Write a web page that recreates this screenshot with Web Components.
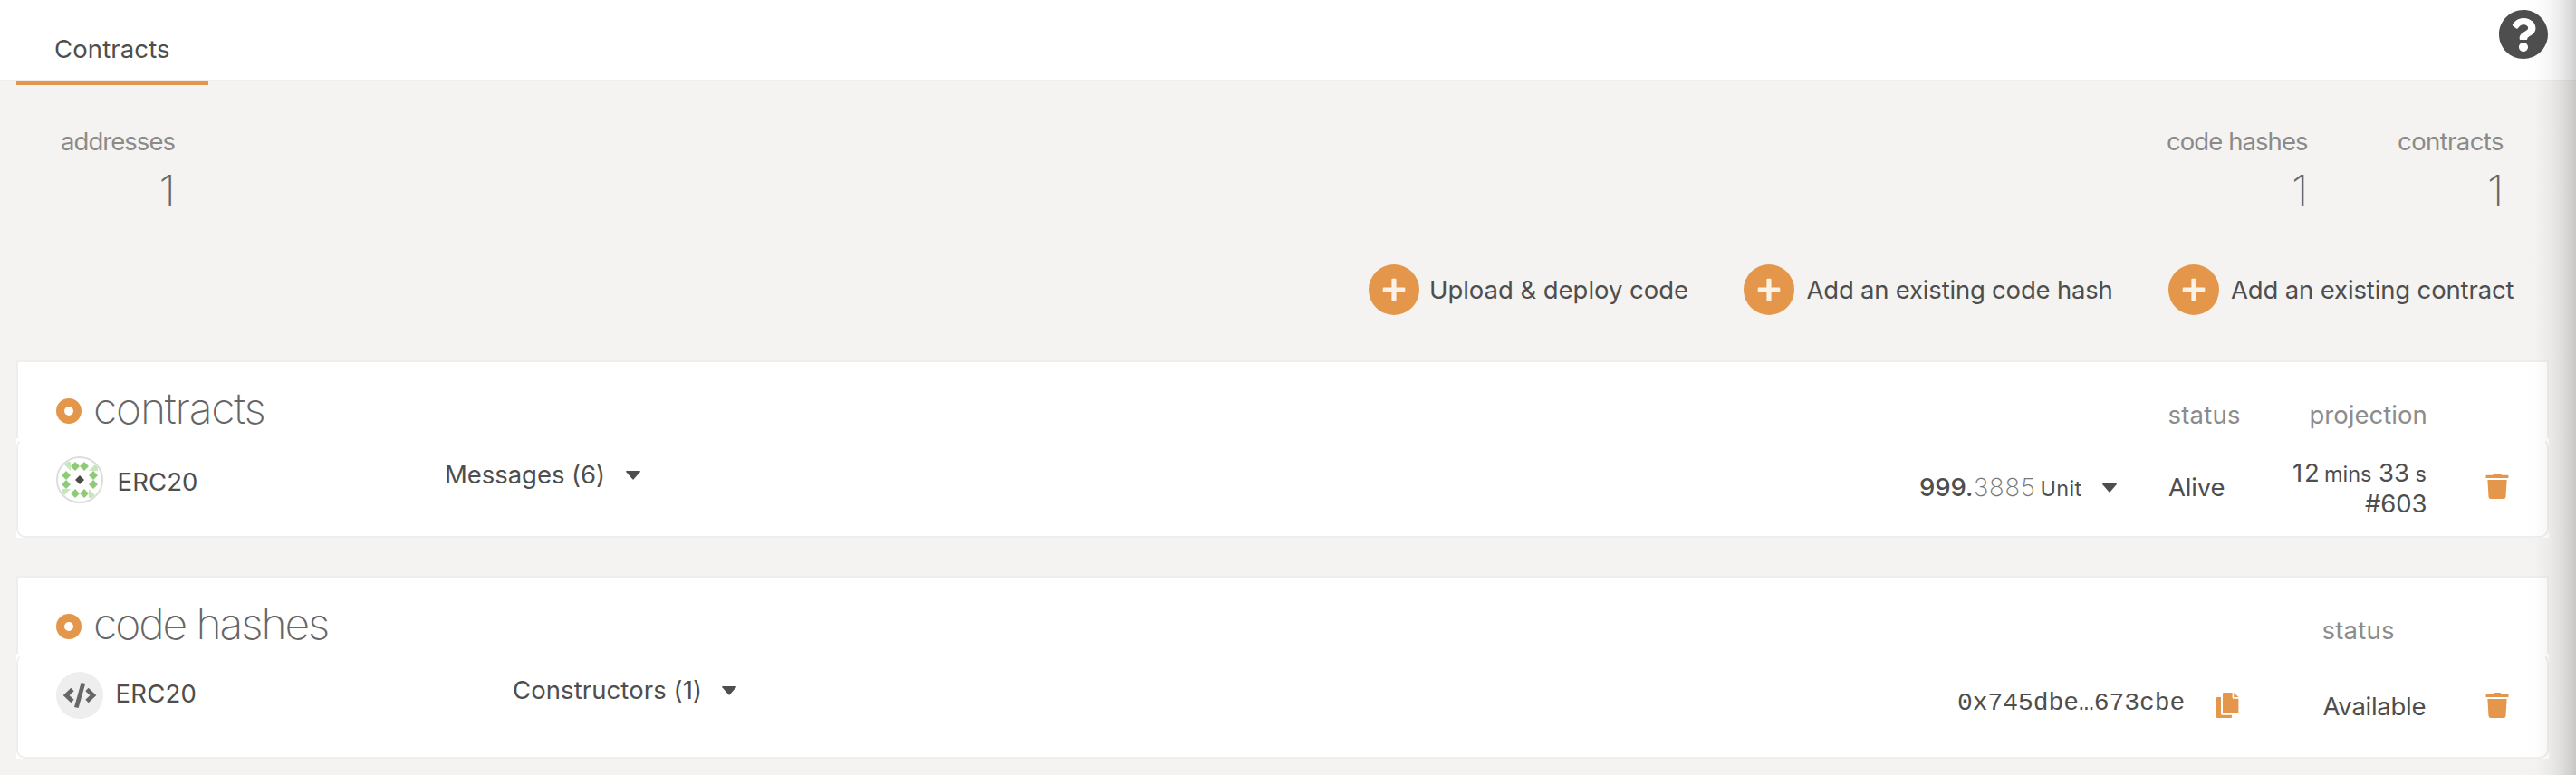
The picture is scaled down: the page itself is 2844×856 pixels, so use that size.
<!DOCTYPE html>
<html lang="en">
<head>
<meta charset="utf-8">
<title>Contracts</title>
<style>
html,body{margin:0;height:100%}
body{font-family:Inter,"Liberation Sans",sans-serif;background:#f4f3f1;color:#4e4e4e;overflow:hidden}
</style>
</head>
<body>
<contracts-app></contracts-app>
<script>
const define = (name, html, setup) => {
  const t = document.createElement('template');
  t.innerHTML = html;
  customElements.define(name, class extends HTMLElement {
    constructor() {
      super();
      this.attachShadow({ mode: 'open' }).append(t.content.cloneNode(true));
    }
    connectedCallback() { if (setup) setup(this); }
  });
};

/* Text run whose box hugs its glyphs; "w" is the tracked width of the run. */
const ctx = document.createElement('canvas').getContext('2d');
define('ui-text', `<style>:host{display:block;flex:none;white-space:pre;line-height:40px}</style><slot></slot>`, el => {
  const size = +(el.getAttribute('size') || 27.5);
  const weight = el.getAttribute('weight') || 400;
  const family = el.hasAttribute('mono') ? '"Liberation Mono", monospace' : 'Inter, "Liberation Sans", sans-serif';
  ctx.font = `${weight} ${size}px ${family}`;
  const text = el.textContent, m = ctx.measureText(text);
  const ink = m.actualBoundingBoxRight + m.actualBoundingBoxLeft;
  const ls = text.length > 1 ? (+el.getAttribute('w') - ink) / (text.length - 1) : 0;
  Object.assign(el.style, {
    font: `${weight} ${size}px/${size > 40 ? 60 : 40}px ${family}`,
    letterSpacing: ls + 'px',
    marginLeft: m.actualBoundingBoxLeft + 'px',
    marginRight: -(m.width - m.actualBoundingBoxRight + ls) + 'px'
  });
});

define('ui-caret', `<style>:host{display:block;flex:none;width:16px;height:10px}svg{display:block}</style>
<svg width="16" height="10"><path d="M.6 0H15.4Q16.2 .3 15.6 1.2L8.7 9.3Q8 10 7.3 9.3L.4 1.2Q-.2 .3 .6 0Z" fill="#4e4e4e"/></svg>`);

define('icon-trash', `<style>:host{display:block;flex:none;width:26px;height:28px}svg{display:block}</style>
<svg width="26" height="28" fill="#e4974b"><path d="M1.3 1.7H8L9 .5Q9.3 0 10 0H16Q16.7 0 17 .5L18 1.7H24.7Q25.5 1.7 25.5 2.5V5H.5V2.5Q.5 1.7 1.3 1.7Z"/><path d="M2.4 7H23.6L22.5 25.8Q22.3 28 20.2 28H5.8Q3.7 28 3.5 25.8Z"/></svg>`);

define('icon-copy', `<style>:host{display:block;flex:none;width:25px;height:28px}svg{display:block}</style>
<svg width="25" height="28" fill="#e4974b"><path d="M0 6Q0 5 1 5H5V23.5Q5 24.7 6.2 24.7H17V27Q17 28 16 28H1Q0 28 0 27Z"/><path d="M7 1Q7 0 8 0H17.6V5.4Q17.6 6.7 18.9 6.7H24.4V21.8Q24.4 22.8 23.4 22.8H8Q7 22.8 7 21.8Z"/><path d="M19.2 0 24.4 5.1H19.2Z"/></svg>`);

define('icon-help', `<style>:host{display:block;width:54px;height:54px}svg{display:block}</style>
<svg width="54" height="54" viewBox="8 8 496 496"><path fill="#4e4e4e" d="M504 256c0 136.997-111.043 248-248 248S8 392.997 8 256C8 119.083 119.043 8 256 8s248 111.083 248 248zM262.655 90c-54.497 0-89.255 22.957-116.549 63.758-3.536 5.286-2.353 12.415 2.715 16.258l34.699 26.31c5.205 3.947 12.621 3.008 16.665-2.122 17.864-22.658 30.113-35.797 57.303-35.797 20.429 0 45.698 13.148 45.698 32.958 0 14.976-12.363 22.667-32.534 33.976C247.128 238.528 216 254.941 216 296v4c0 6.627 5.373 12 12 12h56c6.627 0 12-5.373 12-12v-1.333c0-28.462 83.186-29.647 83.186-106.667 0-58.002-60.165-102-116.531-102zM256 338c-25.365 0-46 20.635-46 46 0 25.364 20.635 46 46 46s46-20.636 46-46c0-25.365-20.635-46-46-46z"/></svg>`);

define('icon-code', `<style>:host{display:block;flex:none;width:52px;height:52px;border-radius:50%;background:#eee}svg{display:block}</style>
<svg width="52" height="52"><path d="M27.6 12 32.2 13.1 24.6 40.1 20 38.9Z" fill="#666"/><path d="M18 19.6 11.2 26 18 32.4M34 19.6 40.8 26 34 32.4" fill="none" stroke="#666" stroke-width="4.8"/></svg>`);

define('icon-identity', `<style>:host{display:block;flex:none;width:52px;height:52px}svg{display:block}</style>
<svg width="52" height="52"><defs><clipPath id="c"><circle cx="26" cy="26" r="24"/></clipPath></defs>
<circle cx="26" cy="26" r="25" fill="#fff" stroke="#ddd" stroke-width="2"/>
<g clip-path="url(#c)"><path fill="#c7e6ba" d="M6 6H16V16ZM46 6V16H36ZM46 46H36V36ZM6 46V36H16Z"/>
<path fill="#8fcb77" d="M21 6l5 5-5 5-5-5zM31 6l5 5-5 5-5-5zM11 16l5 5-5 5-5-5zM41 16l5 5-5 5-5-5zM11 26l5 5-5 5-5-5zM41 26l5 5-5 5-5-5zM21 36l5 5-5 5-5-5zM31 36l5 5-5 5-5-5z"/>
<path fill="#4b4b4b" d="M26 21l5 5-5 5-5-5z"/></g></svg>`);

define('top-bar', `<style>
:host{display:flex;box-sizing:border-box;height:90px;background:#fff;border-bottom:2px solid #ededee;justify-content:space-between}
.tab{box-sizing:border-box;margin-left:18px;width:212px;height:94px;padding:34px 0 0 43px;border-bottom:4px solid #e4974b}
icon-help{margin:11px 31px 0 0}
</style><div class="tab"><slot></slot></div><icon-help></icon-help>`);

define('summary-stat', `<style>
:host{display:flex;flex-direction:column;align-items:flex-end;gap:5px}
.label{color:#8b8a88}.value{color:#666;padding-right:4px}
</style><div class="label"><slot name="label"></slot></div><div class="value"><slot></slot></div>`);

define('add-button', `<style>
:host{display:flex;align-items:center;gap:var(--gap,13.5px)}
svg{display:block;flex:none}
</style><svg width="56" height="56"><circle cx="28" cy="28" r="28" fill="#e4974b"/><path d="M16.8 25.4H25.4V16.8Q25.4 15.7 26.5 15.7H29.5Q30.6 15.7 30.6 16.8V25.4H39.2Q40.3 25.4 40.3 26.5V29.5Q40.3 30.6 39.2 30.6H30.6V39.2Q30.6 40.3 29.5 40.3H26.5Q25.4 40.3 25.4 39.2V30.6H16.8Q15.7 30.6 15.7 29.5V26.5Q15.7 25.4 16.8 25.4Z" fill="#fbf1e7"/></svg><slot></slot>`);

define('list-card', `<style>
:host{display:block;background:#fff;margin:0 30px 0 18px}
header{box-sizing:border-box;height:86px;border:2px solid #efeeed;border-bottom:0;display:flex;padding-left:42px}
.ring{box-sizing:border-box;width:28px;height:28px;border:9.6px solid #e4974b;border-radius:50%;margin:40px 15px 0 0}
.title{color:#666;padding-top:21px}
.cols{display:flex;margin-left:auto;padding-top:38px;color:#8c8c8c}
.row{box-sizing:border-box;height:var(--row);border:2px solid #eee;border-top-color:transparent;border-radius:10px;display:flex;align-items:flex-start;padding-left:42px}
</style><header><div class="ring"></div><div class="title"><slot name="title"></slot></div><div class="cols"><slot name="col"></slot></div></header>
<div class="row"><slot></slot></div>`);

define('contracts-app', `<style>
:host{display:block;position:relative;height:856px;overflow:hidden}
.stats{display:flex;padding:46px 80px 0 68px;height:110px}
.stats .push{margin-left:auto;margin-right:100px}
.actions{display:flex;justify-content:flex-end;gap:62px;margin:46px 68.5px 50px 0}
list-card+list-card{margin-top:42px}
.light{color:#777}
.small{padding-top:2px}
.time{display:flex;flex-direction:column;align-items:flex-end;margin-top:16px;width:145.5px}
.time div{display:flex;height:34px}
.edge{position:absolute;top:0;right:0;bottom:0;width:64px;pointer-events:none;background:linear-gradient(to right,rgba(0,0,0,0),rgba(0,0,0,.004) 30%,rgba(0,0,0,.034) 54%,rgba(0,0,0,.085) 75%,rgba(0,0,0,.14) 90%,rgba(0,0,0,.18))}
</style>
<top-bar><ui-text w="126">Contracts</ui-text></top-bar>
<div class="stats">
<summary-stat><ui-text slot="label" w="125.5">addresses</ui-text><ui-text size="48" weight="200">1</ui-text></summary-stat>
<summary-stat class="push"><ui-text slot="label" w="155">code hashes</ui-text><ui-text size="48" weight="200">1</ui-text></summary-stat>
<summary-stat><ui-text slot="label" w="116">contracts</ui-text><ui-text size="48" weight="200">1</ui-text></summary-stat>
</div>
<div class="actions">
<add-button style="--gap:12.5px"><ui-text w="283">Upload &amp; deploy code</ui-text></add-button>
<add-button><ui-text w="337">Add an existing code hash</ui-text></add-button>
<add-button><ui-text w="312.5">Add an existing contract</ui-text></add-button>
</div>
<list-card style="--row:110px">
<ui-text slot="title" size="48" weight="200" w="186.5">contracts</ui-text>
<div slot="col" style="padding-right:78.5px"><ui-text w="78.5">status</ui-text></div>
<div slot="col" style="padding-right:133.5px"><ui-text w="127">projection</ui-text></div>
<icon-identity style="margin-top:18px"></icon-identity>
<div style="margin:26px 0 0 17.5px;width:361.5px"><ui-text w="85.5">ERC20</ui-text></div>
<div style="margin-top:18px;width:198px;display:flex"><ui-text w="173">Messages (6)</ui-text></div>
<ui-caret style="margin-top:34px"></ui-caret>
<div style="display:flex;margin:32px 0 0 auto">
<ui-text weight="450" w="57">999.</ui-text><div class="light" style="margin-left:3px"><ui-text weight="200" w="66">3885</ui-text></div>
<div class="small" style="margin:0 22.5px 0 8.5px"><ui-text size="23.5" w="44">Unit</ui-text></div><ui-caret style="margin-top:16px"></ui-caret>
<div style="margin-left:57px;width:139px"><ui-text w="61.5">Alive</ui-text></div>
</div>
<div class="time"><div><ui-text w="27">12</ui-text><span style="width:8px"></span><ui-text class="small" size="23.5" w="51">mins</ui-text><span style="width:9px"></span><ui-text w="32">33</ui-text><span style="width:8.5px"></span><ui-text class="small" size="23.5" w="10">s</ui-text></div>
<div><ui-text w="67.5">#603</ui-text></div></div>
<icon-trash style="margin:37px 42px 0 65.5px"></icon-trash>
</list-card>
<list-card style="--row:116px">
<ui-text slot="title" size="48" weight="200" w="257">code hashes</ui-text>
<div slot="col" style="padding-right:169px"><ui-text w="78.5">status</ui-text></div>
<icon-code style="margin-top:18px"></icon-code>
<div style="margin:22px 0 0 15.5px;width:437.5px"><ui-text w="86">ERC20</ui-text></div>
<div style="margin-top:18px;width:230px;display:flex"><ui-text w="206">Constructors (1)</ui-text></div>
<ui-caret style="margin-top:34px"></ui-caret>
<div style="margin:33px 0 0 auto"><ui-text mono size="28" w="248.5">0x745dbe…673cbe</ui-text></div>
<icon-copy style="margin:41px 93px 0 36px"></icon-copy>
<div style="margin-top:36px;width:113px"><ui-text w="113">Available</ui-text></div>
<icon-trash style="margin:41px 42px 0 66.5px"></icon-trash>
</list-card>
<div class="edge"></div>`);
</script>
</body>
</html>
